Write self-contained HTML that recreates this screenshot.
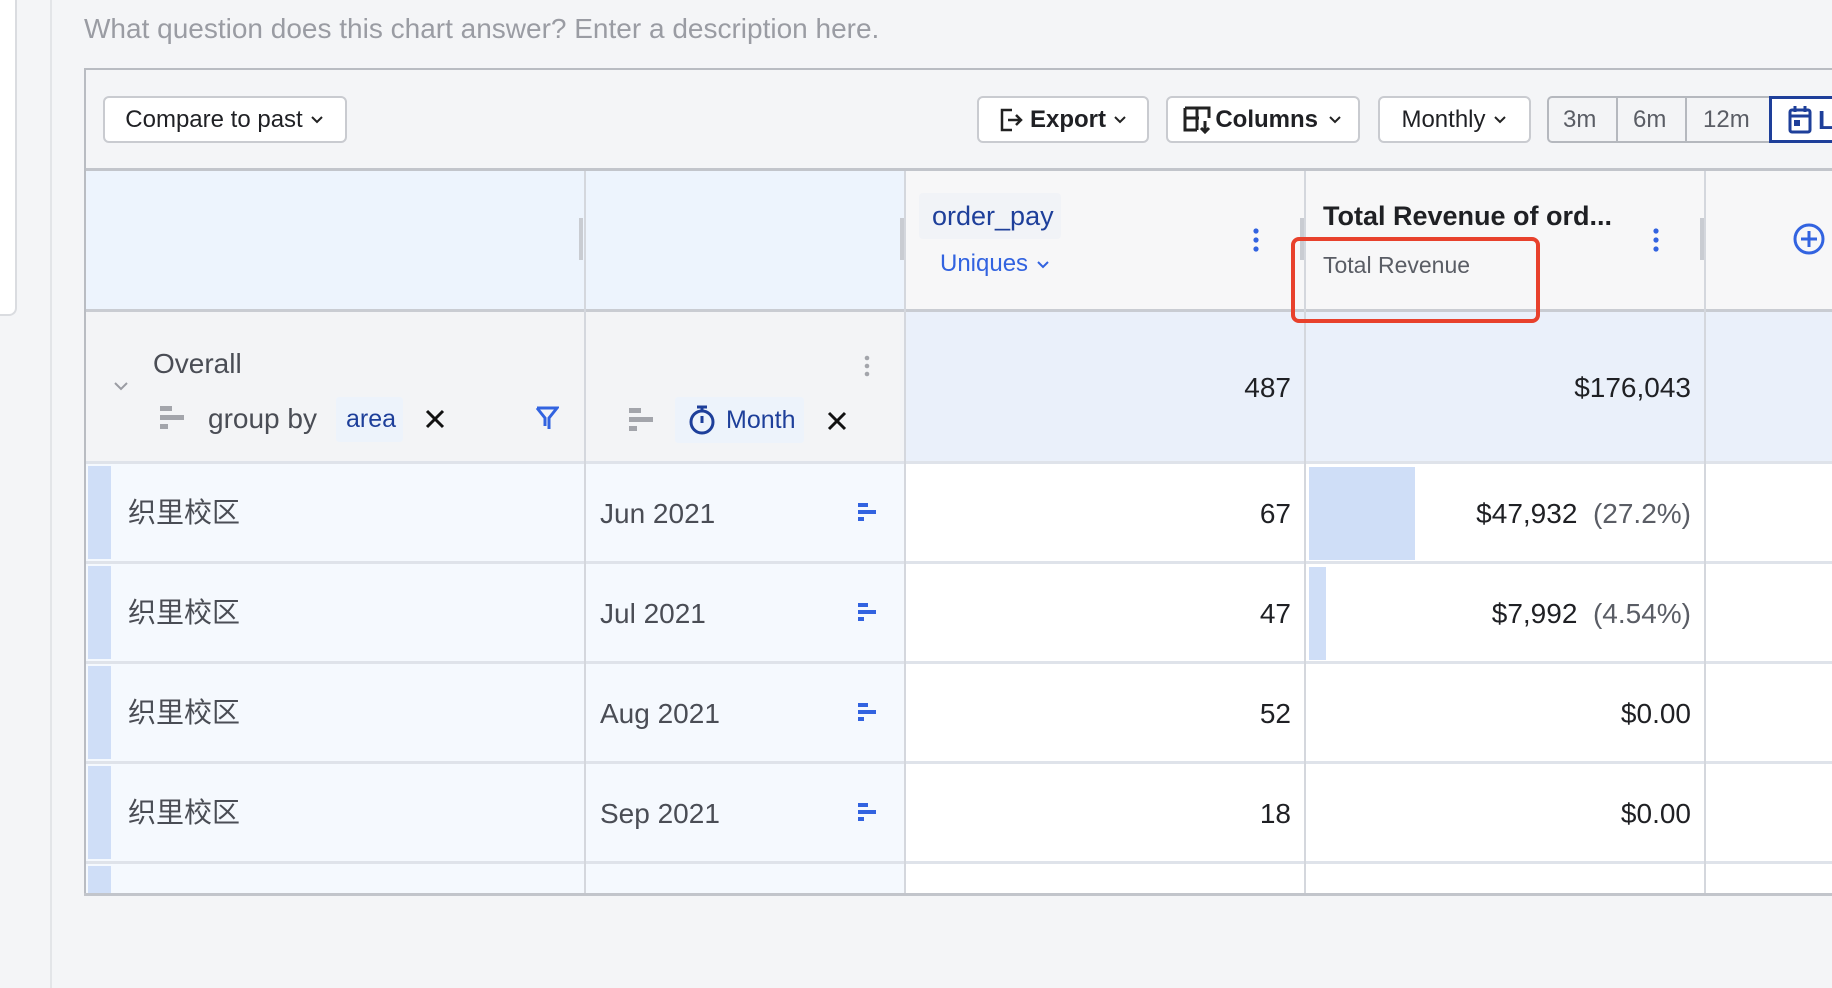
<!DOCTYPE html>
<html><head><meta charset="utf-8"><style>
*{box-sizing:border-box;margin:0;padding:0}
body{width:1832px;height:988px;overflow:hidden;background:#f4f5f7;font-family:"Liberation Sans","Noto Sans CJK SC",sans-serif;position:relative;color:#25272c}
.a{position:absolute}
.t{position:absolute;white-space:nowrap;line-height:1}
.btn{position:absolute;background:#fff;border:2px solid #c9cbd0;border-radius:6px;font-size:24px;color:#1f2024;display:flex;align-items:center;justify-content:center;gap:6px}
.vl{position:absolute;width:2px;background:#d8dadf}
.hl{position:absolute;height:3px;background:#dfe3ea;left:86px;right:0}
.num{position:absolute;font-size:28px;line-height:1;text-align:right;color:#1f2024}
.cn{font-size:28px;color:#4a4d55}
.dt{font-size:28px;color:#4a4d55}
</style></head><body>
<div class="a" style="left:0;top:0;width:17px;height:316px;background:#fff;border:2px solid #dadce0;border-left:none;border-top:none;border-radius:0 0 8px 0"></div>
<div class="a" style="left:50px;top:0;width:2px;height:988px;background:#e3e5e8"></div>
<div class="t" style="left:84px;top:15px;font-size:28px;color:#9a9ca3">What question does this chart answer? Enter a description here.</div>

<div class="a" style="left:84px;top:68px;width:1760px;height:828px;border:2px solid #b9bcc2;border-right:none;background:#f4f5f7"></div>
<div class="a" style="left:86px;top:168px;width:1746px;height:3px;background:#c2c5cb"></div>

<div class="btn" style="left:103px;top:96px;width:244px;height:47px">Compare to past <svg width="16" height="12" viewBox="0 0 16 12"><path d="M3 3l5 5 5-5" fill="none" stroke="#222" stroke-width="2"/></svg></div>
<div class="btn" style="left:977px;top:96px;width:172px;height:47px;font-weight:bold"><svg width="26" height="26" viewBox="0 0 26 26"><path d="M14 3H4v20h10M10 13h13M18 8l5 5-5 5" fill="none" stroke="#222" stroke-width="2.5"/></svg>Export <svg width="16" height="12" viewBox="0 0 16 12"><path d="M3 3l5 5 5-5" fill="none" stroke="#222" stroke-width="2"/></svg></div>
<div class="btn" style="left:1166px;top:96px;width:194px;height:47px;font-weight:bold;gap:2px"><svg width="30" height="30" viewBox="0 0 30 30"><path d="M2 3h24v10M2 3v22h12M2 13h14M14 3v22M22 16v11M18 23l4 4 4-4" fill="none" stroke="#222" stroke-width="3"/></svg>Columns&nbsp;<svg width="16" height="12" viewBox="0 0 16 12"><path d="M3 3l5 5 5-5" fill="none" stroke="#222" stroke-width="2"/></svg></div>
<div class="btn" style="left:1378px;top:96px;width:153px;height:47px">Monthly <svg width="16" height="12" viewBox="0 0 16 12"><path d="M3 3l5 5 5-5" fill="none" stroke="#222" stroke-width="2"/></svg></div>
<div class="a" style="left:1547px;top:96px;width:300px;height:47px;border:2px solid #b5b8be;border-radius:5px;background:#f3f4f6"></div>
<div class="a" style="left:1616px;top:96px;width:2px;height:47px;background:#b5b8be"></div>
<div class="a" style="left:1685px;top:96px;width:2px;height:47px;background:#b5b8be"></div>
<div class="t" style="left:1563px;top:108px;font-size:24px;color:#5a5d65">3m</div>
<div class="t" style="left:1633px;top:108px;font-size:24px;color:#5a5d65">6m</div>
<div class="t" style="left:1703px;top:108px;font-size:24px;color:#5a5d65">12m</div>
<div class="a" style="left:1769px;top:96px;width:80px;height:47px;border:3px solid #1e3f9a;background:#fff"></div>
<svg class="a" style="left:1788px;top:104px" width="24" height="30" viewBox="0 0 24 30"><rect x="2" y="6" width="20" height="22" rx="2" fill="none" stroke="#1e3f9a" stroke-width="3"/><path d="M2 12h20M7 2v6M17 2v6" stroke="#1e3f9a" stroke-width="3"/><rect x="6" y="16" width="6" height="6" fill="#1e3f9a"/></svg>
<div class="t" style="left:1818px;top:107px;font-size:26px;color:#1e3f9a;font-weight:bold">L</div>

<div class="a" style="left:86px;top:171px;width:819px;height:140px;background:#edf4fd"></div>
<div class="a" style="left:905px;top:171px;width:927px;height:140px;background:#f7f7f8"></div>
<div class="a" style="left:86px;top:309px;width:1746px;height:3px;background:#c9ccd2"></div>
<div class="a" style="left:579px;top:218px;width:4px;height:42px;background:#c9ccd2"></div>
<div class="a" style="left:900px;top:218px;width:4px;height:42px;background:#c9ccd2"></div>
<div class="a" style="left:1300px;top:218px;width:4px;height:42px;background:#c9ccd2"></div>
<div class="a" style="left:1700px;top:218px;width:4px;height:42px;background:#c9ccd2"></div>
<div class="a" style="left:919px;top:193px;width:142px;height:46px;background:#f1f3f7;border-radius:4px"></div>
<div class="t" style="left:932px;top:203px;font-size:27px;color:#1e3f9a">order_pay</div>
<div class="t" style="left:940px;top:252px;font-size:24px;color:#3263e0">Uniques <svg width="16" height="12" viewBox="0 0 16 12"><path d="M3 3l5 5 5-5" fill="none" stroke="#3263e0" stroke-width="2"/></svg></div>
<svg class="a" style="left:1251px;top:228px" width="10" height="26"><circle cx="5" cy="3" r="2.6" fill="#3263e0"/><circle cx="5" cy="12" r="2.6" fill="#3263e0"/><circle cx="5" cy="21" r="2.6" fill="#3263e0"/></svg>
<div class="t" style="left:1323px;top:203px;font-size:27px;font-weight:bold;color:#1f2024">Total Revenue of ord...</div>
<div class="t" style="left:1323px;top:254px;font-size:23px;color:#5a5d65">Total Revenue</div>
<svg class="a" style="left:1651px;top:228px" width="10" height="26"><circle cx="5" cy="3" r="2.6" fill="#3263e0"/><circle cx="5" cy="12" r="2.6" fill="#3263e0"/><circle cx="5" cy="21" r="2.6" fill="#3263e0"/></svg>
<svg class="a" style="left:1792px;top:222px" width="34" height="34" viewBox="0 0 34 34"><circle cx="17" cy="17" r="14" fill="none" stroke="#3263e0" stroke-width="3"/><path d="M17 9v16M9 17h16" stroke="#3263e0" stroke-width="3"/></svg>

<div class="a" style="left:86px;top:312px;width:819px;height:151px;background:#f3f4f6"></div>
<div class="a" style="left:905px;top:312px;width:927px;height:151px;background:#eaf0fa"></div>
<svg class="a" style="left:112px;top:380px" width="18" height="12"><path d="M3 3l6 6 6-6" fill="none" stroke="#9a9ca3" stroke-width="2"/></svg>
<div class="t" style="left:153px;top:350px;font-size:28px;color:#4a4d55">Overall</div>
<svg class="a" style="left:158px;top:404px" width="28" height="28"><rect x="2" y="2" width="12" height="5" fill="#a3a5ab"/><rect x="2" y="11" width="24" height="5" fill="#a3a5ab"/><rect x="2" y="20" width="8" height="5" fill="#a3a5ab"/></svg>
<div class="t" style="left:208px;top:405px;font-size:28px;color:#4a4d55">group by</div>
<div class="a" style="left:336px;top:397px;width:67px;height:45px;background:#edf3fb;border-radius:3px"></div>
<div class="t" style="left:346px;top:407px;font-size:25px;color:#1e3f9a">area</div>
<svg class="a" style="left:424px;top:408px" width="22" height="22"><path d="M3 3l16 16M19 3L3 19" stroke="#111" stroke-width="3"/></svg>
<svg class="a" style="left:535px;top:405px" width="24" height="26"><path d="M2 3h20l-8 10v11M2 3l8 10v8" fill="none" stroke="#3263e0" stroke-width="3"/></svg>
<svg class="a" style="left:627px;top:406px" width="28" height="28"><rect x="2" y="2" width="12" height="5" fill="#a3a5ab"/><rect x="2" y="11" width="24" height="5" fill="#a3a5ab"/><rect x="2" y="20" width="8" height="5" fill="#a3a5ab"/></svg>
<div class="a" style="left:675px;top:397px;width:129px;height:46px;background:#edf3fb;border-radius:3px"></div>
<svg class="a" style="left:688px;top:404px" width="28" height="32" viewBox="0 0 28 32"><circle cx="14" cy="18" r="11" fill="none" stroke="#1e3f9a" stroke-width="3"/><path d="M9 3h10M14 3v4M14 12v7" stroke="#1e3f9a" stroke-width="3"/></svg>
<div class="t" style="left:726px;top:408px;font-size:25px;color:#1e3f9a">Month</div>
<svg class="a" style="left:826px;top:410px" width="22" height="22"><path d="M3 3l16 16M19 3L3 19" stroke="#111" stroke-width="3"/></svg>
<svg class="a" style="left:862px;top:355px" width="10" height="24"><circle cx="5" cy="3" r="2.3" fill="#a3a5ab"/><circle cx="5" cy="11" r="2.3" fill="#a3a5ab"/><circle cx="5" cy="19" r="2.3" fill="#a3a5ab"/></svg>
<div class="num" style="right:541px;top:374px">487</div>
<div class="num" style="right:141px;top:374px">$176,043</div>

<div class="a" style="left:86px;top:463px;width:819px;height:432px;background:#f5f9fe"></div>
<div class="a" style="left:905px;top:463px;width:927px;height:432px;background:#fff"></div>
<div class="a" style="left:1309px;top:467px;width:106px;height:93px;background:#cfdef7"></div>
<div class="a" style="left:1309px;top:567px;width:17px;height:93px;background:#cfdef7"></div>
<div class="hl" style="top:461px"></div>
<div class="hl" style="top:561px"></div>
<div class="hl" style="top:661px"></div>
<div class="hl" style="top:761px"></div>
<div class="hl" style="top:861px"></div>
<div class="a" style="left:88px;top:466px;width:23px;height:93px;background:#cfdef7"></div>
<div class="a" style="left:88px;top:566px;width:23px;height:93px;background:#cfdef7"></div>
<div class="a" style="left:88px;top:666px;width:23px;height:93px;background:#cfdef7"></div>
<div class="a" style="left:88px;top:766px;width:23px;height:93px;background:#cfdef7"></div>
<div class="a" style="left:88px;top:866px;width:23px;height:29px;background:#cfdef7"></div>
<div class="vl" style="left:584px;top:171px;height:724px;background:#d4d7dd"></div>
<div class="vl" style="left:904px;top:171px;height:724px;background:#d4d7dd"></div>
<div class="vl" style="left:1304px;top:171px;height:724px;background:#d4d7dd"></div>
<div class="vl" style="left:1704px;top:171px;height:724px;background:#d4d7dd"></div>

<div class="t cn" style="left:128px;top:499px">织里校区</div>
<div class="t cn" style="left:128px;top:599px">织里校区</div>
<div class="t cn" style="left:128px;top:699px">织里校区</div>
<div class="t cn" style="left:128px;top:799px">织里校区</div>
<div class="t dt" style="left:600px;top:500px">Jun 2021</div>
<div class="t dt" style="left:600px;top:600px">Jul 2021</div>
<div class="t dt" style="left:600px;top:700px">Aug 2021</div>
<div class="t dt" style="left:600px;top:800px">Sep 2021</div>
<svg class="a" style="left:858px;top:503px" width="20" height="20"><rect x="0" y="0" width="10" height="4" fill="#3263e0"/><rect x="0" y="7" width="18" height="4" fill="#3263e0"/><rect x="0" y="14" width="6" height="4" fill="#3263e0"/></svg>
<svg class="a" style="left:858px;top:603px" width="20" height="20"><rect x="0" y="0" width="10" height="4" fill="#3263e0"/><rect x="0" y="7" width="18" height="4" fill="#3263e0"/><rect x="0" y="14" width="6" height="4" fill="#3263e0"/></svg>
<svg class="a" style="left:858px;top:703px" width="20" height="20"><rect x="0" y="0" width="10" height="4" fill="#3263e0"/><rect x="0" y="7" width="18" height="4" fill="#3263e0"/><rect x="0" y="14" width="6" height="4" fill="#3263e0"/></svg>
<svg class="a" style="left:858px;top:803px" width="20" height="20"><rect x="0" y="0" width="10" height="4" fill="#3263e0"/><rect x="0" y="7" width="18" height="4" fill="#3263e0"/><rect x="0" y="14" width="6" height="4" fill="#3263e0"/></svg>

<div class="num" style="right:541px;top:500px">67</div>
<div class="num" style="right:541px;top:600px">47</div>
<div class="num" style="right:541px;top:700px">52</div>
<div class="num" style="right:541px;top:800px">18</div>
<div class="num" style="right:141px;top:500px">$47,932&nbsp;&nbsp;<span style="color:#5a5d65">(27.2%)</span></div>
<div class="num" style="right:141px;top:600px">$7,992&nbsp;&nbsp;<span style="color:#5a5d65">(4.54%)</span></div>
<div class="num" style="right:141px;top:700px">$0.00</div>
<div class="num" style="right:141px;top:800px">$0.00</div>
<div class="a" style="left:84px;top:893px;width:1748px;height:3px;background:#c2c5cb"></div>
<div class="a" style="left:1291px;top:237px;width:249px;height:86px;border:4px solid #e8412c;border-radius:8px;z-index:5"></div>
</body></html>
